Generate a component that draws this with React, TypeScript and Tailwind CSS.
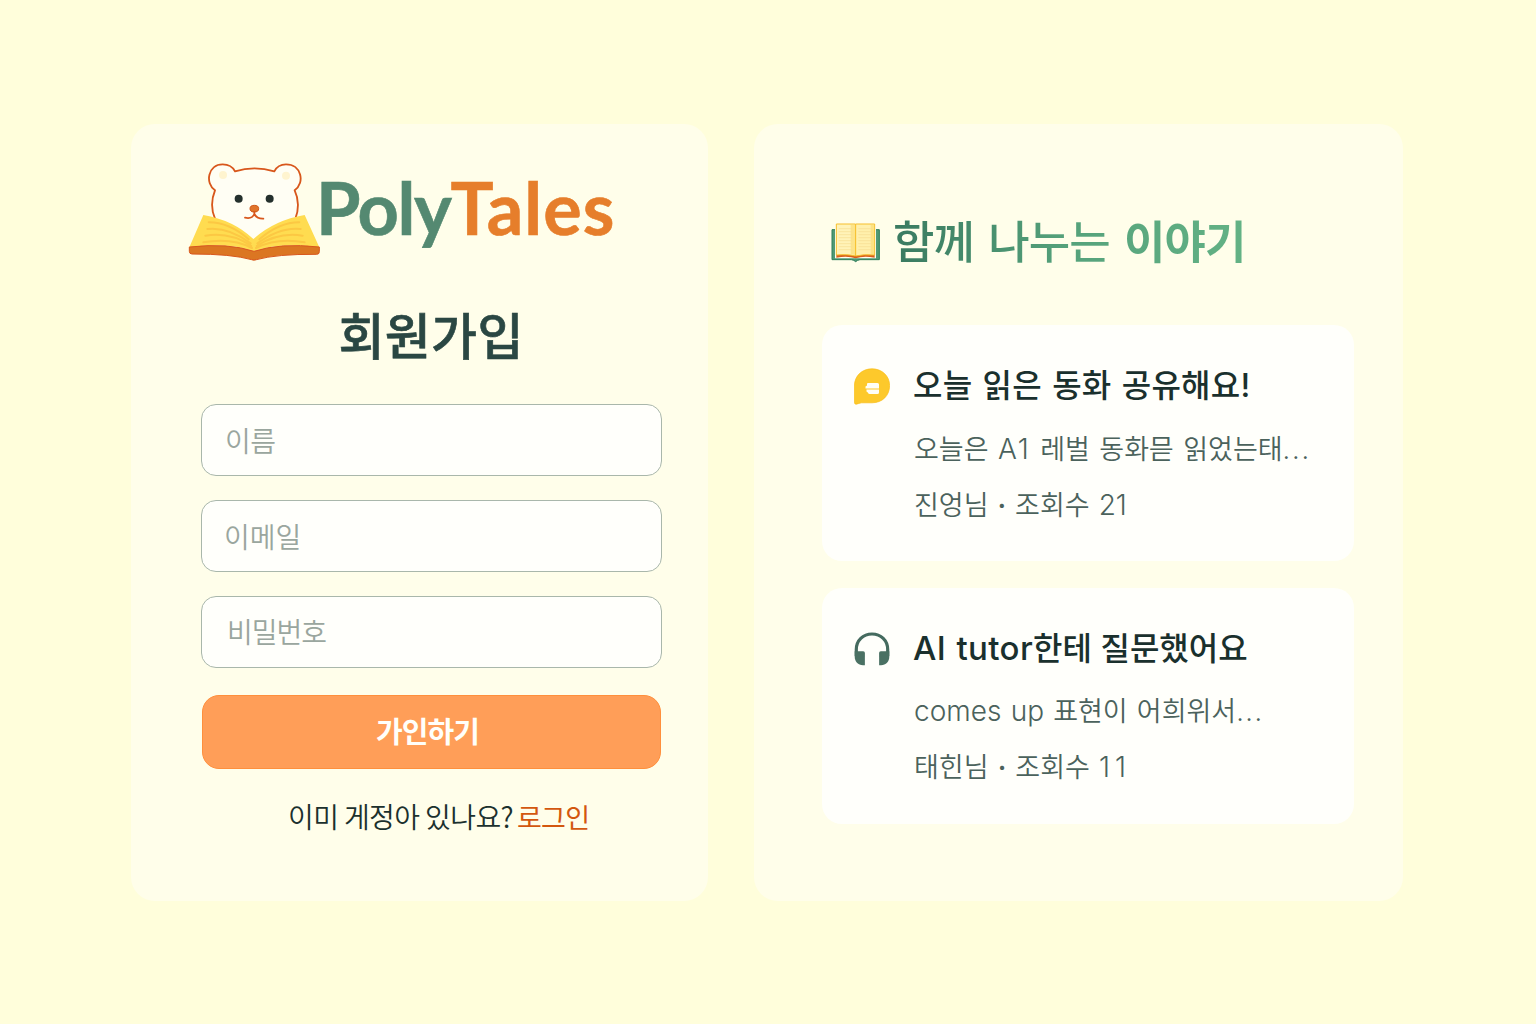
import React from "react";

const KR = "font-['Noto_Sans_CJK_KR',sans-serif]";
const MIX = "font-['Inter','Noto_Sans_CJK_KR',sans-serif]";

function BearLogo() {
  return (
    <svg className="h-[100px] w-[132px] shrink-0" viewBox="24 36 396 300" fill="none" aria-hidden="true">
      <path
        d="M105 206C94 180 94 148 105 121C74 100 84 43 128 43C145 43 158 50 165 64Q223 46 283 64C290 50 303 43 318 43C364 43 376 98 344 121C357 148 356 180 347 203L222 270Z"
        fill="#fffef4"
      />
      <path
        d="M105 206C94 180 94 148 105 121C74 100 84 43 128 43C145 43 158 50 165 64Q223 46 283 64C290 50 303 43 318 43C364 43 376 98 344 121C357 148 356 180 347 203"
        stroke="#d8571c"
        strokeWidth="5.500"
        strokeLinejoin="round"
      />
      <circle cx="129" cy="75" r="12" fill="#fff4cf" />
      <circle cx="318" cy="77" r="12" fill="#fff4cf" />
      <circle cx="176" cy="146" r="12" fill="#24302d" />
      <circle cx="269" cy="146" r="12" fill="#24302d" />
      <ellipse cx="223" cy="176" rx="13" ry="10" fill="#e0742a" stroke="#cf5718" strokeWidth="3" />
      <path d="M223 186V194M195 203Q216 208 223 192Q231 207 250 206" stroke="#d8571c" strokeWidth="5.500" strokeLinecap="round" />
      <path d="M70 195Q160 210 220 267Q284 210 374 195L418 292Q300 275 222 304Q145 275 28 292Z" fill="#ffdc50" />
      <path
        d="M86 217C120 217 165 232 206 268M82 237C125 232 172 250 212 280M76 257C120 250 170 258 214 288M70 277C120 268 170 270 216 294"
        stroke="#fcc843"
        strokeWidth="6"
        strokeLinecap="round"
      />
      <path
        d="M358 217C324 217 280 232 238 268M362 237C320 232 274 250 232 280M368 257C324 250 276 258 230 288M374 277C324 268 276 270 228 294"
        stroke="#fcc843"
        strokeWidth="6"
        strokeLinecap="round"
      />
      <path
        d="M28 291Q145 278 222 304Q300 278 418 291V305Q418 313 410 313Q290 312 229 329Q222 332 215 329Q155 312 36 312Q28 312 28 304Z"
        fill="#db7622"
        stroke="#d8571c"
        strokeWidth="3"
        strokeLinejoin="round"
      />
    </svg>
  );
}

function OpenBook() {
  return (
    <svg className="h-[41px] w-[50px] shrink-0" viewBox="33 50 150 123" fill="none" aria-hidden="true">
      <path d="M36 73H178V163H120Q112 164 107 169Q102 164 94 163H36Z" fill="#4f9a76" stroke="#2f7d5a" strokeWidth="3" />
      <path d="M45 66H168V159H45Z" fill="#fffef0" />
      <path d="M49 146H164V157Q130 151 107 159Q84 151 49 157Z" fill="#d9601c" />
      <path d="M49 56H106V152Q84 146 49 149Z" fill="#fff3b8" stroke="#f6bf2c" strokeWidth="3" />
      <path d="M164 56H107V152Q130 146 164 149Z" fill="#fff0ac" stroke="#f6bf2c" strokeWidth="3" />
      <path d="M92 58H104V149L92 146ZM152 58H162V147H152Z" fill="#fbd65a" opacity=".5" />
      <path
        d="M56 70H98M56 79H98M56 88H98M56 97H98M56 106H98M56 115H98M56 124H98M56 133H98M115 70H157M115 79H157M115 88H157M115 97H157M115 106H157M115 115H157M115 124H157M115 133H157"
        stroke="#f6dc92"
        strokeWidth="2"
      />
    </svg>
  );
}

function ChatIcon() {
  return (
    <svg className="h-[37px] w-9" viewBox="0 0 36 37" fill="none" aria-hidden="true">
      <path
        d="M18 .8C28 .8 35.6 8 35.6 17.5C35.6 27.5 28.500 34.800 18 34.800H7.500C5.500 34.800 4 36.200 2.200 36.200C1 36.200 .4 35.500 .4 34.300V18C.4 8 8 .8 18 .8Z"
        fill="#fdc92b"
        stroke="#f9bd17"
        strokeWidth=".7"
      />
      <path d="M14 15H23.500Q25 15 25 16.500V20.400H11.500V18.500L13 17.600V16Q13 15 14 15Z" fill="#fffef6" />
      <path d="M12.500 21.600H25V24.500Q25 26 23.500 26H15.500Q14 26 13.800 24.600L12.500 23.500Z" fill="#fffef6" />
    </svg>
  );
}

function HeadphonesIcon() {
  return (
    <svg className="h-[34px] w-9" viewBox="0 0 36 34" fill="none" aria-hidden="true">
      <path d="M2.300 24V17.500C2.300 8.500 9 2 18 2S33.700 8.500 33.700 17.500V24" stroke="#456b5f" strokeWidth="3.200" />
      <path d="M.7 19.300H9.200Q10.900 19.300 10.900 21V33.200H9C4 33.200 .7 29.800 .7 24.500Z" fill="#4a7163" />
      <path d="M35.300 19.300H26.800Q25.100 19.300 25.100 21V33.200H27C32 33.200 35.300 29.800 35.300 24.500Z" fill="#4a7163" />
    </svg>
  );
}

const input =
  "h-[72px] w-full rounded-[15px] border border-[#a9b7ab] bg-[#fffffb] pr-5 text-[28px] font-[350] text-[#24403c] outline-none placeholder:text-[#9aa69e] placeholder:opacity-100";

export default function App() {
  return (
    <main className={`${KR} flex h-[1024px] w-[1536px] items-start gap-[46px] overflow-hidden bg-[#fffedb] pl-[131px] pt-[124px] whitespace-nowrap`}>
      <section className="h-[777px] w-[577px] shrink-0 rounded-3xl bg-[#fffeea] pt-[38px]">
        <div className="flex h-[100px] items-start pl-[57px]">
          <BearLogo />
          <div className="-ml-[4px] font-['Lato',sans-serif] text-[72px] leading-[91px] font-bold [-webkit-text-stroke:0.6px]">
            <span className="tracking-[-1.400px] text-[#548971]">Poly</span>
            <span className="tracking-[1px] text-[#e67e2b]">Tales</span>
          </div>
        </div>
        <h1 className="mt-[41px] pl-[207.500px] text-[50px] leading-[60px] font-medium tracking-[0.300px] text-[#2a4743] [-webkit-text-stroke:0.6px]">
          회원가입
        </h1>
        <form className="mt-[41px] ml-[70px] flex w-[461px] flex-col" onSubmit={(e) => e.preventDefault()}>
          <input className={`${input} pl-[23px] tracking-[-0.500px]`} placeholder="이름" />
          <input className={`${input} mt-6 pl-[22px]`} placeholder="이메일" />
          <input type="text" className={`${input} mt-6 pb-[2px] pl-[25px] tracking-[-1px]`} placeholder="비밀번호" />
          <button className="ml-px mt-[27px] h-[74px] w-[459px] rounded-[17px] border border-[#ff8f3c] bg-[#ff9e58] pr-[8px] pb-[3px] text-[29px] font-bold tracking-[-0.900px] text-[#fffffa]">
            가인하기
          </button>
        </form>
        <p className="mt-[27px] flex pl-[157px] text-[28px] leading-[40px]">
          <span className="font-[350] tracking-[-0.600px] text-[#1b302d]">이미 게정아 있나요?</span>
          <a className="ml-[4px] pt-px text-[27px] tracking-[-0.800px] text-[#d3570f]">로그인</a>
        </p>
      </section>

      <section className="h-[777px] w-[649px] shrink-0 rounded-3xl bg-[#fffeea] pt-[87px]">
        <div className="flex h-[62px] items-start pl-[77px]">
          <div className="pt-[11px]">
            <OpenBook />
          </div>
          <h2 className="mt-px ml-[12px] bg-linear-to-r from-[#3a7a60] via-[#55a27b] to-[#63b285] bg-clip-text text-[45px] leading-[56px] font-medium tracking-[-0.900px] text-transparent [word-spacing:5px]">
            함께 나누는 <span className="font-bold">이야기</span>
          </h2>
        </div>
        <div className={`${MIX} mt-[52px] ml-[68px] flex w-[532px] flex-col gap-[27px]`}>
          <article className="flex h-[236px] rounded-[20px] bg-[#fffffb] pl-[32px]">
            <div className="w-9 shrink-0 pt-[43px]">
              <ChatIcon />
            </div>
            <div className="ml-[23px] pt-[41px] text-[27px] leading-[40px] font-[350] text-[#4b625c]">
              <h3 className="text-[32px] leading-[40px] font-medium tracking-[0.200px] text-[#1a302d] [word-spacing:1.600px]">
                오늘 읽은 동화 공유해요!
              </h3>
              <p className="mt-[24px] h-10 pl-px [word-spacing:1.800px]">
                오늘은 <span className="text-[28px] leading-none tracking-[2px]">A1</span> 레벌 동화믇 읽었는태
                <span className="tracking-[1.800px]">...</span>
              </p>
              <p className="mt-4 h-10 pl-px [word-spacing:1.400px]">
                진엉님 <span className="font-semibold">·</span> 조회수 <span className="text-[28px] leading-none">21</span>
              </p>
            </div>
          </article>
          <article className="flex h-[236px] rounded-[20px] bg-[#fffffb] pl-[32px]">
            <div className="w-9 shrink-0 pt-[44px]">
              <HeadphonesIcon />
            </div>
            <div className="ml-[23px] pt-[40px] text-[27px] leading-[40px] font-[350] text-[#4b625c]">
              <h3 className="text-[32px] leading-[40px] font-medium text-[#1a302d]">
                <span className="text-[33px] font-[450] tracking-[0.400px] [word-spacing:1px]">AI tutor</span>한테 질문했어요
              </h3>
              <p className="mt-[22px] pl-px [word-spacing:1.500px]">
                <span className="text-[28px]">comes up</span> 표현이 어희위서
                <span className="tracking-[1.500px]">...</span>
              </p>
              <p className="mt-4 h-10 pl-px [word-spacing:1.500px]">
                태힌님 <span className="font-semibold">·</span> 조회수 <span className="text-[28px] leading-none tracking-[5px]">11</span>
              </p>
            </div>
          </article>
        </div>
      </section>
    </main>
  );
}
